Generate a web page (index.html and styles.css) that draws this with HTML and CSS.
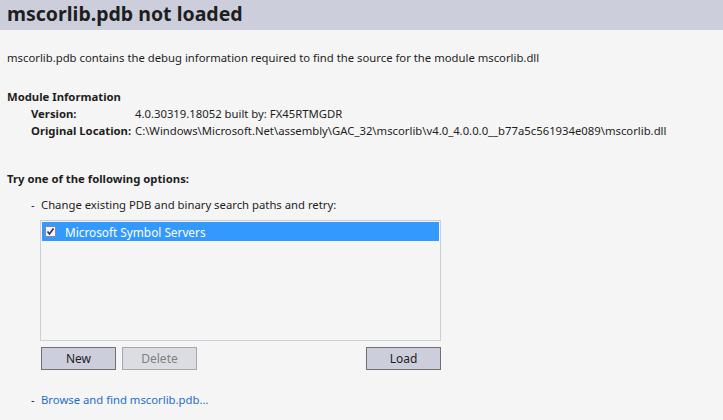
FILE: index.html
```html
<!DOCTYPE html>
<html lang="en">
<head>
    <meta charset="UTF-8">
    <title>mscorlib.pdb not loaded</title>
    <link rel="stylesheet" href="styles.css">
</head>
<body>

    <div class="header">
        <h1>mscorlib.pdb not loaded</h1>
    </div>

    <div class="content">
        <p class="intro">mscorlib.pdb contains the debug information required to find the source for the module mscorlib.dll</p>

        <div class="module">
            <h2>Module Information</h2>
            <div class="row">
                <span class="label">Version:</span>
                <span class="value">4.0.30319.18052 built by: FX45RTMGDR</span>
            </div>
            <div class="row">
                <span class="label">Original Location:</span>
                <span class="value">C:\Windows\Microsoft.Net\assembly\GAC_32\mscorlib\v4.0_4.0.0.0__b77a5c561934e089\mscorlib.dll</span>
            </div>
        </div>

        <div class="options">
            <h2>Try one of the following options:</h2>
            <div class="option">
                <span class="dash">-</span>
                <span>Change existing PDB and binary search paths and retry:</span>
            </div>

            <div class="paths">
                <div class="listbox">
                    <div class="item selected">
                        <span class="check">
                            <svg width="11" height="11" viewBox="0 0 11 11">
                                <rect x="0.5" y="0.5" width="10" height="10" fill="#f4f4f4" stroke="#8a8a96"/>
                                <path d="M2.5 5.5 L4.5 8 L8.5 2.5" fill="none" stroke="#2a2a78" stroke-width="1.6"/>
                            </svg>
                        </span>
                        Microsoft Symbol Servers
                    </div>
                </div>
                <div class="buttons">
                    <button class="btn">New</button>
                    <button class="btn disabled">Delete</button>
                    <span class="spacer"></span>
                    <button class="btn">Load</button>
                </div>
            </div>

            <div class="option browse">
                <span class="dash">-</span>
                <a href="#">Browse and find mscorlib.pdb...</a>
            </div>
        </div>
    </div>

</body>
</html>
```

FILE: styles.css
```css
*{
    margin: 0;
    padding: 0;
    box-sizing: border-box;
}

body{
    width: 723px;
    height: 420px;
    overflow: hidden;
    background: #f5f5f5;
    color: #1e1e1e;
    font-family: "Noto Sans", "Open Sans", sans-serif;
    font-size: 11.3px;
}

.header{
    height: 30px;
    padding-left: 7px;
    background: #cccedb;
}

.header h1{
    font-size: 19.5px;
    font-weight: bold;
    line-height: 27px;
    color: #1e1e1e;
}

.content{
    padding: 0 7px;
}

.intro{
    margin-top: 20px;
    line-height: 16px;
}

.module{
    margin-top: 23px;
}

h2{
    font-size: 11.3px;
    font-weight: bold;
    line-height: 16px;
}

.row{
    display: flex;
    line-height: 17px;
    padding-left: 24px;
}

.row .label{
    width: 104px;
    font-weight: bold;
}

.options{
    margin-top: 32px;
}

.option{
    display: flex;
    margin-top: 9px;
    line-height: 17px;
    padding-left: 24px;
}

.option .dash{
    width: 10px;
}

.paths{
    margin-left: 33px;
    width: 401px;
    margin-top: 7px;
}

.listbox{
    height: 121px;
    border: 1px solid #ccced6;
    padding: 1px;
    background: #f5f5f5;
}

.item{
    display: flex;
    align-items: center;
    height: 19px;
    padding-left: 3px;
    color: #fff;
    font-size: 11.8px;
}

.item.selected{
    background: #3399ff;
}

.check{
    display: flex;
    margin-right: 9px;
}

.buttons{
    display: flex;
    margin-top: 6px;
    margin-left: 1px;
}

.spacer{
    flex: 1;
}

.btn{
    width: 75px;
    height: 23px;
    margin-right: 6px;
    border: 1px solid #707070;
    background: #cccedb;
    color: #1e1e1e;
    font-family: inherit;
    font-size: 12px;
}

.btn:last-child{
    margin-right: 0;
}

.btn.disabled{
    border-color: #a8a8ac;
    background: #dcdde3;
    color: #808080;
}

.option.browse{
    margin-top: 21px;
}

.option a{
    color: #1e6ec8;
    text-decoration: none;
}
```
